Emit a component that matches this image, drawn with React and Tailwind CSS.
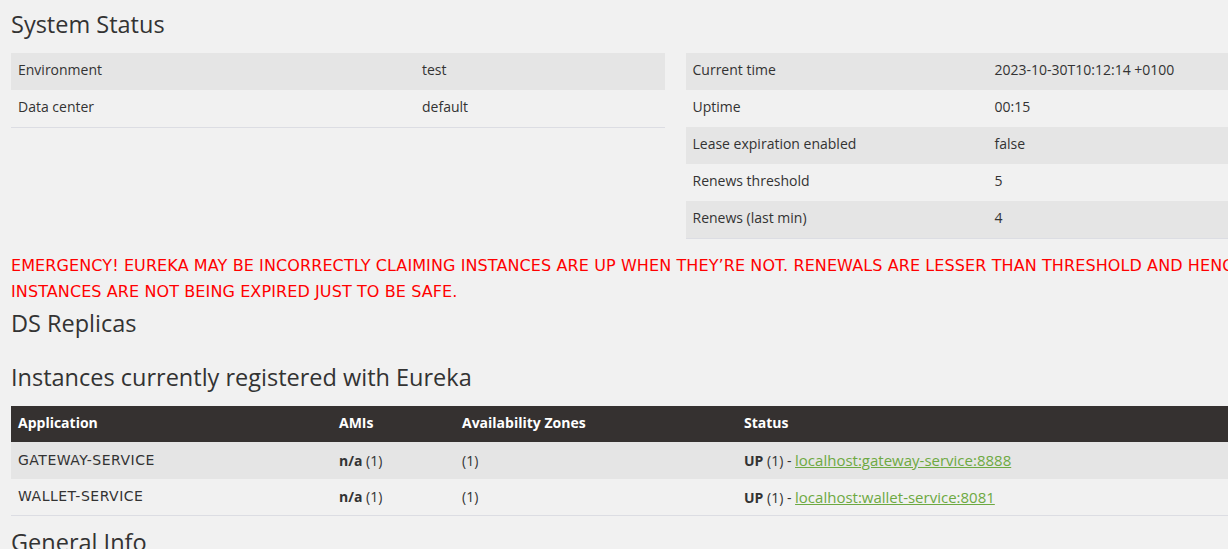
const leftRows = [
  ['Environment', 'test'],
  ['Data center', 'default'],
];

const rightRows = [
  ['Current time', '2023-10-30T10:12:14 +0100'],
  ['Uptime', '00:15'],
  ['Lease expiration enabled', 'false'],
  ['Renews threshold', '5'],
  ['Renews (last min)', '4'],
];

const instances = [
  { app: 'GATEWAY-SERVICE', link: 'localhost:gateway-service:8888' },
  { app: 'WALLET-SERVICE', link: 'localhost:wallet-service:8081' },
];

function InfoTable({ rows, labelWidth }) {
  return (
    <table className="w-full border-collapse text-[14px] text-[#333]">
      <tbody>
        {rows.map(([label, value], i) => (
          <tr
            key={label}
            className={`h-[37px] ${i % 2 === 0 ? 'bg-[#e5e5e5]' : 'bg-[#f1f1f1]'} ${
              i === rows.length - 1 ? 'border-b border-[#dcdde3]' : ''
            }`}
          >
            <td className={`pl-[7px] pb-[4px] ${labelWidth}`}>{label}</td>
            <td className="pl-[7px] pb-[4px]">{value}</td>
          </tr>
        ))}
      </tbody>
    </table>
  );
}

function Heading({ children, className = '' }) {
  return (
    <h2 className={`text-[23.5px] leading-[28px] text-[#333] ${className}`}>{children}</h2>
  );
}

export default function App() {
  return (
    <div className="w-full h-[549px] overflow-hidden bg-[#f1f1f1] font-['Open_Sans',sans-serif]">
      <div className="w-[1360px] pl-[11px] pt-[10px]">
        <Heading>System Status</Heading>

        <div className="flex gap-[21px] mt-[15px] w-[1328px]">
          <div className="flex-1">
            <InfoTable rows={leftRows} labelWidth="w-[404px]" />
          </div>
          <div className="flex-1">
            <InfoTable rows={rightRows} labelWidth="w-[302px]" />
          </div>
        </div>

        <p className="mt-[14px] font-['DejaVu_Sans',sans-serif] text-[16px] tracking-[0.1px] leading-[26px] text-[#ff0000] uppercase">
          Emergency! Eureka may be incorrectly claiming instances are up when they’re not. Renewals
          are lesser than threshold and hence the
          <br />
          instances are not being expired just to be safe.
        </p>

        <Heading className="mt-[4px]">DS Replicas</Heading>

        <Heading className="mt-[26px]">Instances currently registered with Eureka</Heading>

        <table className="mt-[15px] w-[1328px] border-collapse text-[14px] text-[#333]">
          <thead>
            <tr className="h-[36px] bg-[#353130] text-white text-left">
              <th className="pl-[7px] pb-[2px] w-[321px] font-bold">Application</th>
              <th className="pl-[7px] pb-[2px] w-[123px] font-bold">AMIs</th>
              <th className="pl-[7px] pb-[2px] w-[282px] font-bold">Availability Zones</th>
              <th className="pl-[7px] pb-[2px] font-bold">Status</th>
            </tr>
          </thead>
          <tbody>
            {instances.map((r, i) => (
              <tr
                key={r.app}
                className={`h-[37px] ${i % 2 === 0 ? 'bg-[#e5e5e5]' : 'bg-[#f1f1f1] border-b border-[#dcdde3]'}`}
              >
                <td className="pl-[7px] font-['DejaVu_Sans',sans-serif] text-[14px] tracking-[0.5px]">
                  {r.app}
                </td>
                <td className="pl-[7px]">
                  <b>n/a</b> (1)
                </td>
                <td className="pl-[7px]">(1)</td>
                <td className="pl-[7px]">
                  <b>UP</b> (1) -{' '}
                  <a href="#" className="text-[#6da942] underline text-[15px]">
                    {r.link}
                  </a>
                </td>
              </tr>
            ))}
          </tbody>
        </table>

        <Heading className="mt-[12px]">General Info</Heading>
      </div>
    </div>
  );
}
